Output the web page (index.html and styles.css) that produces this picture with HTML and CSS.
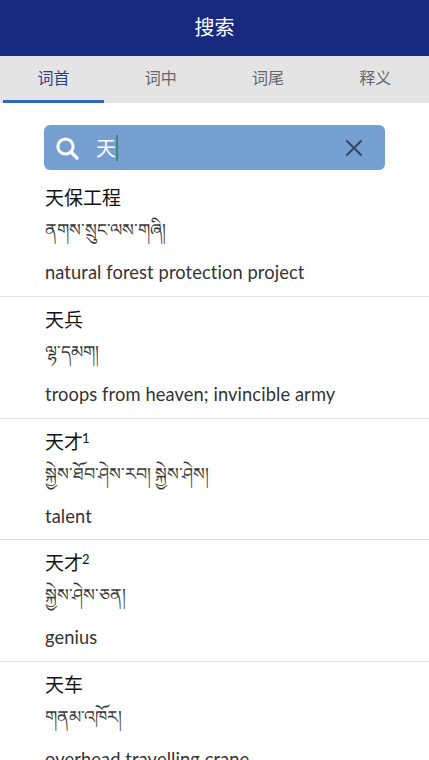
FILE: index.html
```html
<!DOCTYPE html>
<html lang="zh">
<head>
<meta charset="utf-8">
<title>搜索</title>
<link rel="stylesheet" href="styles.css">
</head>
<body>
<div class="app">
  <header class="title">搜索</header>
  <nav class="tabs">
    <div class="tab active">词首</div>
    <div class="tab">词中</div>
    <div class="tab">词尾</div>
    <div class="tab">释义</div>
  </nav>
  <div class="search-wrap">
    <div class="search">
      <svg class="ico-search" viewBox="0 0 24 24" width="24" height="24"><circle cx="10.5" cy="10.5" r="7.6" fill="none" stroke="#fff" stroke-width="3"/><path d="M16 16l6 6" stroke="#fff" stroke-width="3.2" stroke-linecap="round"/></svg>
      <div class="query"><span>天</span><i class="caret"></i></div>
      <svg class="ico-clear" viewBox="0 0 16 16" width="16" height="16"><path d="M1 1l14 14M15 1L1 15" stroke="#36465a" stroke-width="2" stroke-linecap="round"/></svg>
    </div>
  </div>
  <ul class="list">
    <li class="entry"><div class="head">天保工程</div><div class="tib">ནགས་སྲུང་ལས་གཞི།</div><div class="en">natural forest protection project</div></li>
    <li class="entry"><div class="head">天兵</div><div class="tib">ལྷ་དམག།</div><div class="en">troops from heaven; invincible army</div></li>
    <li class="entry"><div class="head">天才<sup>1</sup></div><div class="tib">སྐྱེས་ཐོབ་ཤེས་རབ། སྐྱེས་ཤེས།</div><div class="en">talent</div></li>
    <li class="entry"><div class="head">天才<sup>2</sup></div><div class="tib">སྐྱེས་ཤེས་ཅན།</div><div class="en">genius</div></li>
    <li class="entry"><div class="head">天车</div><div class="tib">གནམ་འཁོར།</div><div class="en">overhead travelling crane</div></li>
  </ul>
</div>
</body>
</html>
```
FILE: styles.css
```css
* { box-sizing: border-box; }
html, body { margin: 0; height: 100%; overflow: hidden; background: #fff; }
.app { width: 429px; height: 760px; overflow: hidden; font-family: "Lato", "Noto Sans CJK SC", sans-serif; }
.title { height: 56px; background: #172a80; color: #fff; font-size: 20px; display: flex; align-items: center; justify-content: center; padding-bottom: 3px; }
.tabs { height: 47px; background: #e4e4e4; display: flex; }
.tab { flex: 1; display: flex; align-items: center; justify-content: center; font-size: 16px; color: #666; padding-bottom: 3px; margin: 0 3px; border-bottom: 3px solid transparent; }
.tab.active { color: #2a4190; border-bottom-color: #2c68b4; }
.search-wrap { padding: 22px 44px 5px; }
.search { height: 45px; background: #769fd1; border-radius: 6px; display: flex; align-items: center; padding: 0 23px 0 11px; }
.query { display: flex; align-items: center; margin-left: 17px; flex: 1; color: #fff; font-size: 20px; }
.caret { width: 2px; height: 26px; background: #35906f; }
.list { list-style: none; margin: 0; padding: 0; }
.entry { height: 121.75px; padding: 11px 0 0 45px; border-bottom: 1px solid #e2e2e2; }
.head { font-size: 19px; line-height: 24px; color: #111; height: 24px; }
.head sup { font-size: 13px; line-height: 0; color: #111; margin-left: -1px; vertical-align: 6px; }
.tib { font-size: 17.5px; line-height: 30px; margin-top: 5px; height: 45px; color: #111; opacity: .85; white-space: nowrap; }
.en { font-size: 18.3px; letter-spacing: .1px; line-height: 24px; color: #333; white-space: nowrap; }
```
